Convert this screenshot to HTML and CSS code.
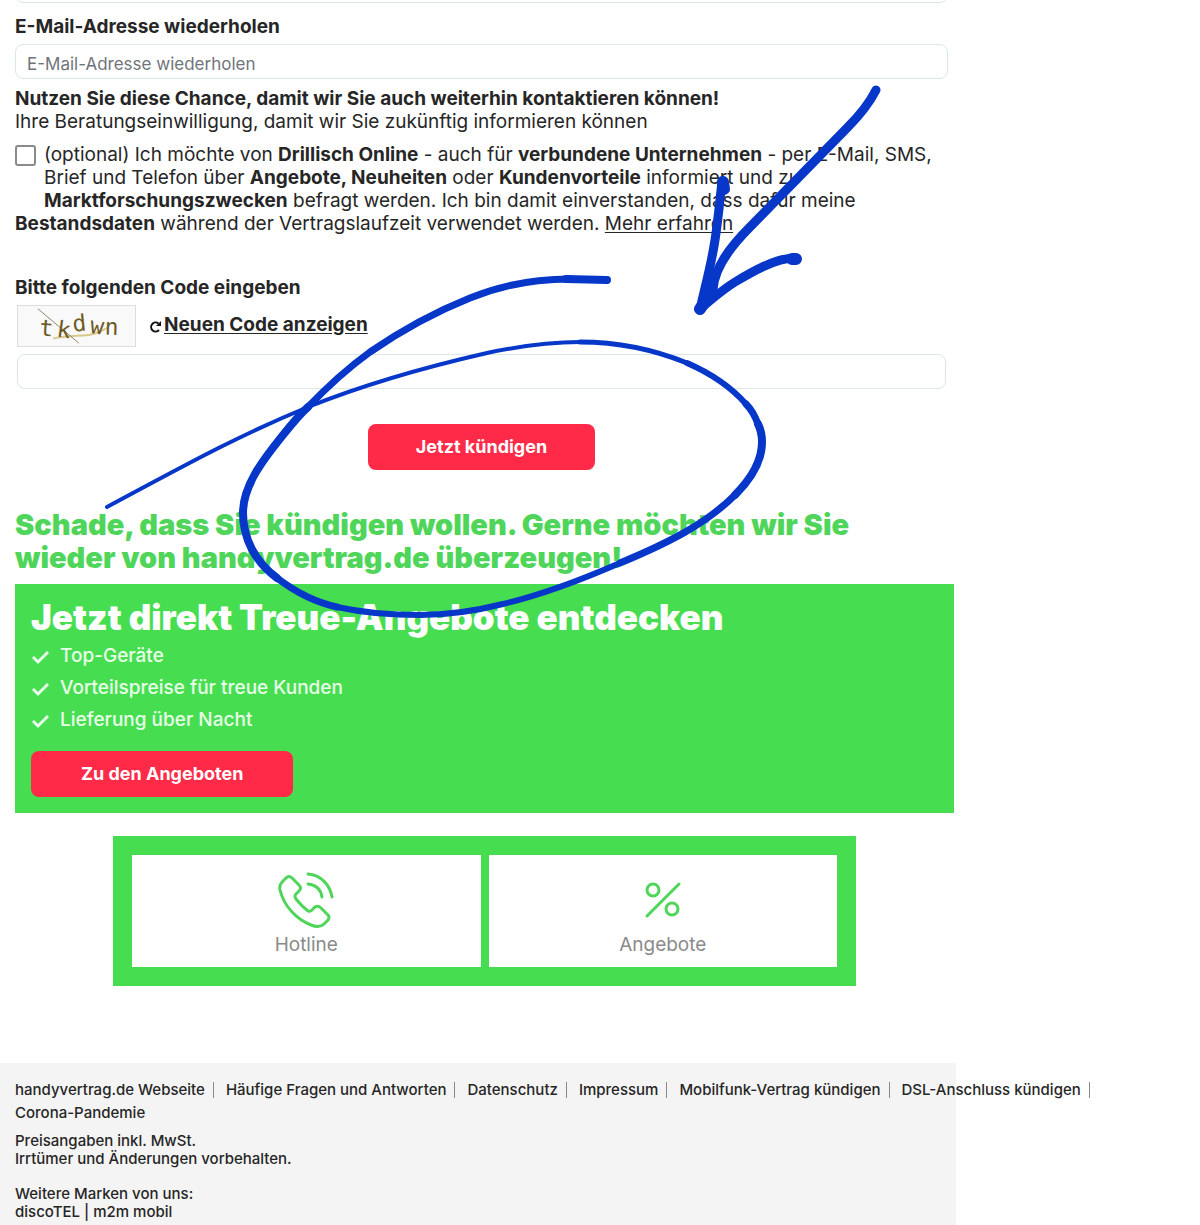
FILE: index.html
```html
<!DOCTYPE html>
<html lang="de">
<head>
<meta charset="utf-8">
<meta name="viewport" content="width=device-width, initial-scale=1">
<title>Vertrag kündigen - handyvertrag.de</title>
<link rel="stylesheet" href="styles.css">
</head>
<body>
<main class="page">
  <form class="form">
    <input class="field" type="email" aria-label="E-Mail-Adresse">
    <label class="label" for="mail2">E-Mail-Adresse wiederholen</label>
    <input class="field" type="email" id="mail2" placeholder="E-Mail-Adresse wiederholen">

    <p class="chance"><b>Nutzen Sie diese Chance, damit wir Sie auch weiterhin kontaktieren können!</b><br>
    Ihre Beratungseinwilligung, damit wir Sie zukünftig informieren können</p>

    <div class="consent">
      <input class="check" type="checkbox" id="consent">
      <label for="consent">(optional) Ich möchte von <b>Drillisch Online</b> - auch für <b>verbundene Unternehmen</b> - per E-Mail, SMS,<br>
      Brief und Telefon über <b>Angebote, Neuheiten</b> oder <b>Kundenvorteile</b> informiert und zu<br>
      <b>Marktforschungszwecken</b> befragt werden. Ich bin damit einverstanden, dass dafür meine<br>
      <b>Bestandsdaten</b> während der Vertragslaufzeit verwendet werden.</label>
      <a href="#">Mehr erfahren</a>
    </div>

    <label class="label" for="code">Bitte folgenden Code eingeben</label>
    <div class="captcha">
      <svg class="captcha-image" viewBox="0 0 119 42" role="img" aria-label="Captcha">
        <path d="M35 34 Q54 31 66 31 T92 23" fill="none" stroke="#d8c78f" stroke-width="2"/>
        <path d="M19 3 L62 39" stroke="#8d8060" stroke-width="1"/>
        <text x="20 38 56 73 89" y="31 32 27 28 30" rotate="4 8 -6 8 2">tkdwn</text>
      </svg>
      <a class="reload" href="#">
        <svg class="reload-icon" viewBox="0 0 13 13" aria-hidden="true">
          <path d="M10 10 A4.5 4.5 0 1 1 9.500 3.500" fill="none" stroke="#111" stroke-width="2"/>
          <path d="M12 1 V6 H7 Z" fill="#111"/>
        </svg><span>Neuen Code anzeigen</span></a>
    </div>
    <input class="field field-code" type="text" id="code">
    <button class="btn btn-submit" type="submit">Jetzt kündigen</button>
  </form>

  <h2 class="regret">Schade, dass Sie kündigen wollen. Gerne möchten wir Sie<br>wieder von handyvertrag.de überzeugen!</h2>

  <section class="promo">
    <h1>Jetzt direkt Treue-Angebote entdecken</h1>
    <ul>
      <li><svg viewBox="0 0 18 16" aria-hidden="true"><path d="M2 8 L7 13 L17 3"/></svg>Top-Geräte</li>
      <li><svg viewBox="0 0 18 16" aria-hidden="true"><path d="M2 8 L7 13 L17 3"/></svg>Vorteilspreise für treue Kunden</li>
      <li><svg viewBox="0 0 18 16" aria-hidden="true"><path d="M2 8 L7 13 L17 3"/></svg>Lieferung über Nacht</li>
    </ul>
    <button class="btn btn-offers" type="button">Zu den Angeboten</button>
  </section>

  <nav class="service">
    <a href="#">
      <svg viewBox="0 0 60 60" aria-hidden="true">
        <path d="M4 20 C3 16 4 14 7 11 L10 8 Q13 5 16 8 L23 15 Q26 18 23 21 L20 24 Q18 26 20 29 C24 34 28 38 32 41 Q34 42 36 40 L39 37 Q42 35 45 38 L52 45 Q54 47 52 50 L48 54 C45 57 40 57 35 55 C20 49 8 36 4 20 Z"/>
        <path d="M32 4 C45 5 54 15 56 27"/>
        <path d="M32 14 C40 15 45 20 46 27"/>
      </svg>
      Hotline
    </a>
    <a href="#">
      <svg viewBox="0 0 60 60" aria-hidden="true">
        <path d="M14 46 L46 14"/>
        <circle cx="20" cy="20" r="6"/>
        <circle cx="39" cy="39" r="6"/>
      </svg>
      Angebote
    </a>
  </nav>
</main>

<footer class="footer">
  <ul class="links">
    <li><a href="#">handyvertrag.de Webseite</a></li>
    <li><a href="#">Häufige Fragen und Antworten</a></li>
    <li><a href="#">Datenschutz</a></li>
    <li><a href="#">Impressum</a></li>
    <li><a href="#">Mobilfunk-Vertrag kündigen</a></li>
    <li><a href="#">DSL-Anschluss kündigen</a></li>
  </ul>
  <a class="corona" href="#">Corona-Pandemie</a>
  <p>Preisangaben inkl. MwSt.<br>Irrtümer und Änderungen vorbehalten.</p>
  <p>Weitere Marken von uns:<br><a href="#">discoTEL</a> | <a href="#">m2m mobil</a></p>
</footer>

<!-- Hand drawn hint: arrow and loop around the cancel button -->
<svg class="marker" viewBox="0 0 1200 1225" aria-hidden="true">
  <!-- loop, the pen gets wider and thinner on the way -->
  <path class="w4" d="M107 507 C180 468 235 437 308 407 C368 383 430 366 487 353 C520 346 550 342 580 342"/>
  <path class="w5" d="M580 342 C620 342 655 350 687 363"/>
  <path class="w6" d="M687 363 C710 373 731 387 746 404"/>
  <path class="w7" d="M746 404 C750 408 755 416 758 424"/>
  <path class="w8" d="M758 424 C761 430 762 436 762 442 C762 460 752 478 735 495"/>
  <path class="w7" d="M735 495 C706 524 668 543 620 563"/>
  <path class="w6" d="M620 563 C581 580 541 595 503 604 C475 611 448 615 420 615 C391 615 364 613 337 607"/>
  <path class="w7" d="M337 607 C314 602 294 591 277 578"/>
  <path class="w8" d="M277 578 C255 562 243 538 243 513 C243 486 262 461 283 435 C291 425 299 415 308 407"/>
  <path class="w7" d="M308 407 C327 387 348 368 370 352 C402 330 435 312 470 298 C502 285 536 279 570 279"/>
  <path class="w8" d="M566 279 L607 280"/>
  <!-- arrow -->
  <path class="w9" d="M876 90 C870 102 860 115 847 128 L750 227 C730 247 714 268 713 290 L705 303"/>
  <path class="w9" d="M722 181 C720 200 718 220 715 240 C711 267 704 290 700 310"/>
  <path class="w12" d="M723 182 L724 189"/>
  <path class="w9" d="M795 258 C775 258 750 273 735 282 C722 290 711 300 700 309"/>
  <path class="w12" d="M792 259 L796 259 M700 309 L706 300 L712 294"/>
</svg>
</body>
</html>
```
FILE: styles.css
```css
* {
  box-sizing: border-box;
}
body {
  position: relative;
  margin: 0;
  overflow-x: hidden;
  background: #fff;
  color: #262626;
  font-family: Inter, "Liberation Sans", sans-serif;
  font-size: 19px;
  line-height: 23px;
}
a {
  color: inherit;
}
.page {
  max-width: 956px;
  padding: 0 2px 0 15px;
  overflow: hidden;
}

/* Form */
.form {
  display: flex;
  flex-direction: column;
  margin-top: -32px;
}
.label {
  margin: 12px 0 6px;
  font-weight: 700;
}
.field {
  height: 35px;
  margin-right: 6px;
  padding: 4px 11px 0;
  border: 1px solid #dbe6e6;
  border-radius: 8px;
  background: #fff;
  color: inherit;
  font: inherit;
  font-size: 17px;
}
.field::placeholder {
  color: #6f747a;
  opacity: 1;
}
.chance {
  margin: 8px 0 10px;
}
.consent {
  margin-bottom: 41px;
}
.consent a {
  text-underline-offset: 2px;
}
/* Floats beside the first three lines, the fourth runs below it */
.check {
  float: left;
  appearance: none;
  width: 21px;
  height: 21px;
  margin: 2px 8px 40px 0;
  border: 2px solid #8a8a8a;
  border-radius: 3px;
  background: #fff;
}
.check:checked {
  background: #46de50;
}
.consent + .label {
  margin: 0 0 6px;
}
.captcha {
  display: flex;
  gap: 13px;
  margin: 0 2px 7px;
}
.captcha-image {
  width: 119px;
  height: 42px;
  border: 1px solid #ddd;
  background: #f9f9f9;
  font: 24px "DejaVu Sans Mono", monospace;
  fill: #6d5a24;
  overflow: visible;
}
.reload {
  display: flex;
  align-items: center;
  align-self: flex-start;
  padding-top: 8px;
  font-weight: 700;
  text-decoration: none;
}
.reload span {
  text-decoration: underline;
  text-underline-offset: 2px;
}
.reload-icon {
  width: 13px;
  height: 13px;
  margin: 4px 2px 0 0;
}
.field-code {
  margin: 0 8px 0 2px;
}
.btn {
  height: 46px;
  padding: 0 48px 2px;
  border: 0;
  border-radius: 8px;
  background: #ff2a48;
  color: #fff;
  font: inherit;
  font-size: 18px;
  font-weight: 700;
  cursor: pointer;
}
.btn-submit {
  align-self: center;
  margin: 35px 6px 38px 0;
}
.btn-offers {
  padding: 0 50px 2px;
}

/* Offers */
.regret {
  margin: 0 0 10px;
  color: #4fd55a;
  font-size: 29px;
  font-weight: 900;
  line-height: 33px;
}
.promo {
  padding: 16px;
  background: #46de50;
  color: #fff;
}
.promo h1 {
  margin: 0 0 5px;
  font-size: 35px;
  font-weight: 900;
  line-height: 34px;
}
.promo ul {
  margin: 0 0 16px;
  padding: 0;
  list-style: none;
}
.promo li {
  display: flex;
  align-items: center;
  gap: 11px;
  height: 32px;
  color: #e9ffe9;
  font-weight: 500;
}
.promo svg {
  width: 18px;
  height: 16px;
  margin-top: 4px;
  fill: none;
  stroke: #e9ffe9;
  stroke-width: 3;
}

/* Service boxes */
.service {
  display: grid;
  grid-template-columns: 1fr 1fr;
  gap: 8px;
  margin: 23px 98px 77px;
  padding: 19px;
  background: #46de50;
}
.service a {
  display: flex;
  flex-direction: column;
  align-items: center;
  padding: 15px 0 11px;
  background: #fff;
  color: #8a8a8a;
  text-decoration: none;
}
.service svg {
  width: 60px;
  height: 60px;
  margin-bottom: 3px;
  fill: none;
  stroke: #4fd55a;
  stroke-width: 3;
  stroke-linecap: round;
}

/* Footer */
.footer {
  max-width: 956px;
  padding: 15px 15px 5px;
  background: #f4f4f4;
  font-size: 15px;
  font-weight: 500;
  line-height: 18px;
}
.footer a {
  text-decoration: none;
}
.links {
  display: flex;
  margin: 0;
  padding: 0;
  list-style: none;
  line-height: 23px;
  white-space: nowrap;
}
.links li {
  display: flex;
  align-items: center;
}
.links li::after {
  content: "";
  height: 16px;
  margin: 0 12px 0 8px;
  border-left: 1px solid #888;
}
.corona {
  line-height: 23px;
}
.footer p {
  margin: 8px 0 17px;
}
.footer p + p {
  margin: 0;
}

/* Drawing on top of the page */
.marker {
  position: absolute;
  top: 0;
  left: 0;
  width: 1200px;
  height: 1225px;
  pointer-events: none;
  fill: none;
  stroke: #0637c8;
  stroke-linecap: round;
  stroke-linejoin: round;
}
.w4 {
  stroke-width: 4;
}
.w5 {
  stroke-width: 5;
}
.w6 {
  stroke-width: 6;
}
.w7 {
  stroke-width: 7;
}
.w8 {
  stroke-width: 8;
}
.w9 {
  stroke-width: 9;
}
.w12 {
  stroke-width: 12;
}
```
